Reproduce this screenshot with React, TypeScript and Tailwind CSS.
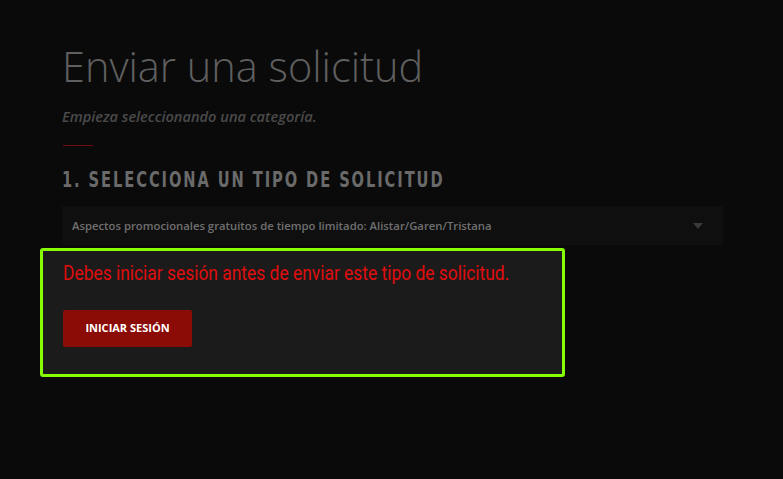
import React from "react";

export default function App() {
  return (
    <div className="min-h-[479px] w-full bg-[#0a0a0a] pt-[36px] pl-[62px] pr-[60px]" style={{ fontFamily: '"Open Sans", sans-serif' }}>
      <h1 className="text-[41.5px] font-light leading-[60px] text-[#5f5f5f] m-0" style={{ fontFamily: '"Open Sans", sans-serif' }}>
        Enviar una solicitud
      </h1>
      <p className="mt-[10px] text-[14.6px] font-semibold italic text-[#4a4a4a] leading-[20px]">
        Empieza seleccionando una categoría.
      </p>
      <div className="mt-[19px] ml-[1px] h-px w-[30px] bg-[#6e0f0c]" />
      <h2
        className="mt-[19px] text-[22px] font-bold tracking-[2.6px] text-[#6a6a6a] leading-[30px] uppercase whitespace-nowrap"
        style={{ fontFamily: '"DejaVu Sans Condensed", "DejaVu Sans", sans-serif', transform: 'scaleX(0.74)', transformOrigin: 'left' }}
      >
        1. Selecciona un tipo de solicitud
      </h2>
      <div className="mt-[11px] flex h-[39px] items-center justify-between bg-[#0f0f0f] pl-[10px] pr-[20px]">
        <span className="text-[11.3px] font-semibold text-[#6f6f6f] pt-[2px]">
          Aspectos promocionales gratuitos de tiempo limitado: Alistar/Garen/Tristana
        </span>
        <svg width="10" height="6" viewBox="0 0 10 6">
          <polygon points="0,0 10,0 5,6" fill="#3a3a3a" />
        </svg>
      </div>
      <div className="-ml-[22px] mt-[3px] w-[525px] h-[129px] rounded-[3px] border-[3px] border-[#88ff00] bg-[#1b1b1b] pl-[20px] pt-[8px]">
        <p className="text-[20px] text-[#e00d0d] leading-[28px] whitespace-nowrap" style={{ fontFamily: 'Roboto, sans-serif', transform: 'scaleX(0.87)', transformOrigin: 'left' }}>
          Debes iniciar sesión antes de enviar este tipo de solicitud.
        </p>
        <button className="mt-[23px] flex h-[37px] w-[129px] items-center justify-center rounded-[2px] bg-[#8b0b07] text-[11px] font-bold text-white">
          INICIAR SESIÓN
        </button>
      </div>
    </div>
  );
}
